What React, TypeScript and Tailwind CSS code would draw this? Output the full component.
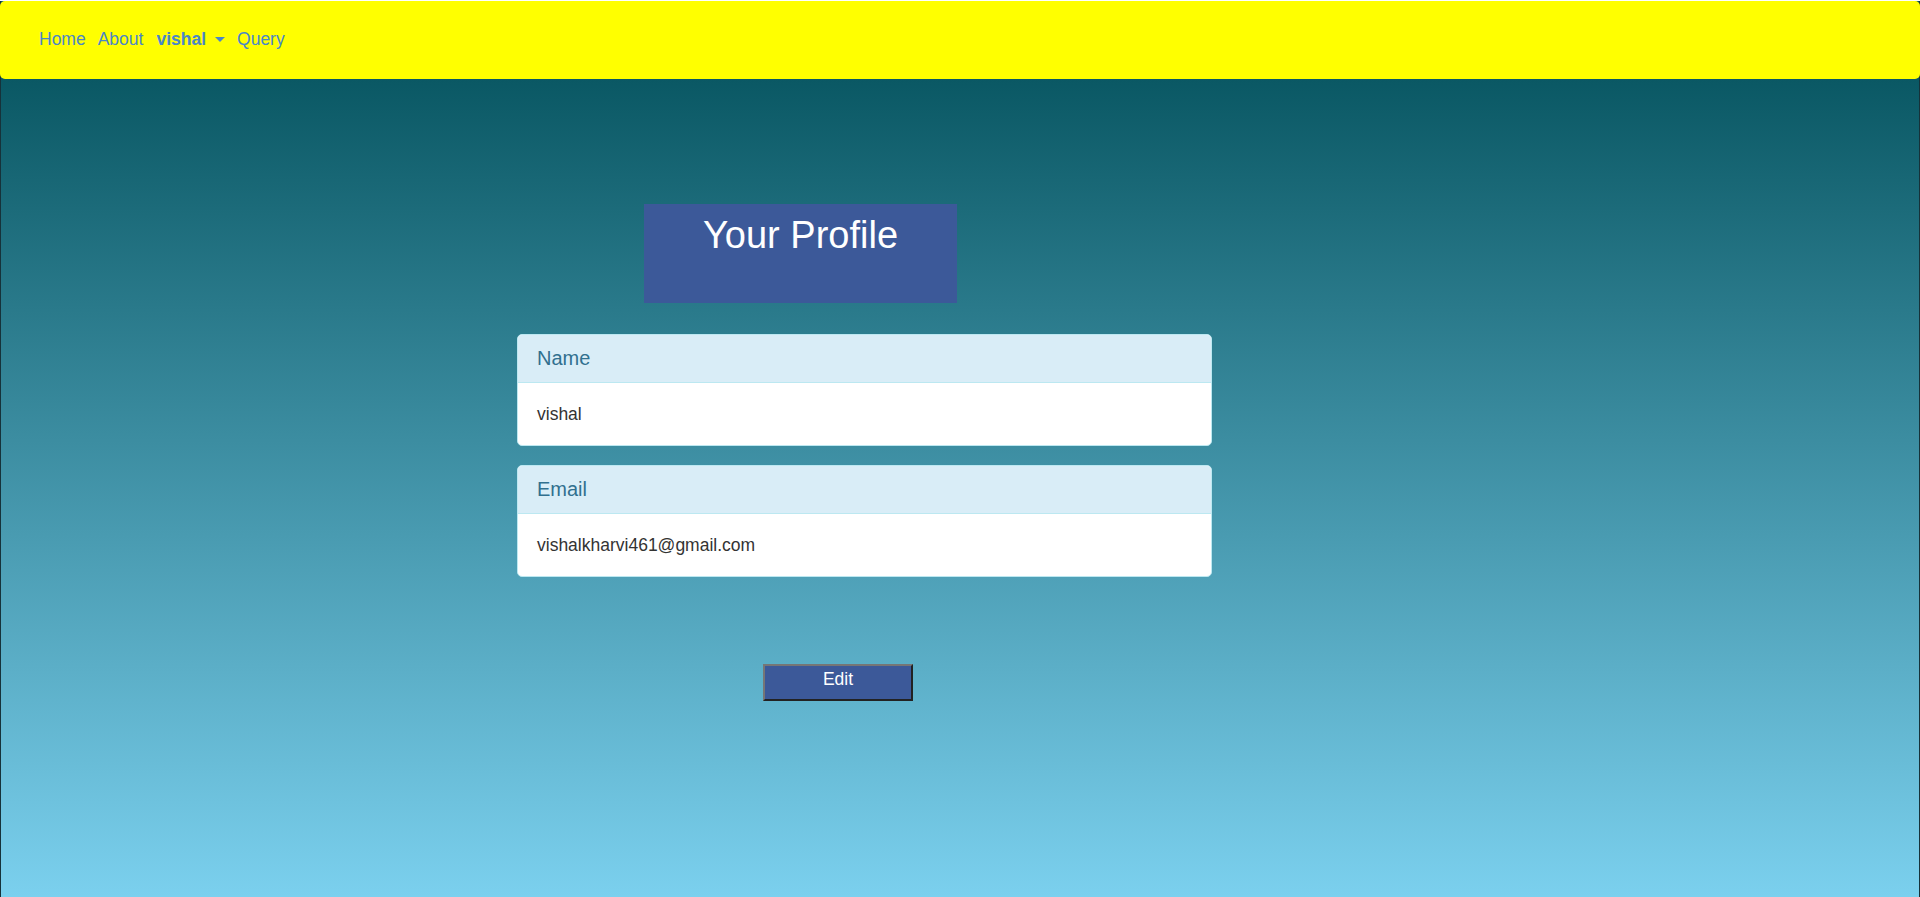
import React from "react";

export default function App() {
  return (
    <div className="h-[897px] w-full bg-white pt-px overflow-hidden" style={{ fontFamily: '"Liberation Sans", Arial, sans-serif' }}>
      <div className="flex h-[896px] flex-col border-x border-[#16323a] bg-[linear-gradient(to_bottom,#0a5864_78px,#7bd0ee)]">
        <nav className="-mx-px flex h-[78px] shrink-0 items-center rounded-[5px] bg-[#ffff00] pb-[2px] pl-[39px] text-[17.5px] text-[#4a86c8]">
          <a className="mr-[12px]">Home</a>
          <a className="mr-[13px]">About</a>
          <a className="flex items-center font-bold">
            vishal
            <span className="ml-[9px] mr-[12px] inline-block h-0 w-0 border-x-[5.5px] border-t-[5.5px] border-x-transparent border-t-[#4a86c8]" />
          </a>
          <a>Query</a>
        </nav>
        <div className="flex flex-col items-start">
          <div className="ml-[643px] mt-[125px] h-[99px] w-[313px] bg-[#3c5999] pt-[10px] text-center">
            <h1 className="text-[38px] leading-[42px] text-white">Your Profile</h1>
          </div>
          <div className="ml-[516px] mt-[31px] w-[695px] overflow-hidden rounded-[5px] border border-[#bce8f1] bg-white">
            <div className="h-[48px] border-b border-[#bce8f1] bg-[#d9edf7] px-[19px] pt-[12px] text-[20px] leading-[22px] text-[#31708f]">Name</div>
            <div className="px-[19px] pt-[19px] pb-[18px] text-[17.5px] leading-[25px] text-[#333]">vishal</div>
          </div>
          <div className="ml-[516px] mt-[19px] w-[695px] overflow-hidden rounded-[5px] border border-[#bce8f1] bg-white">
            <div className="h-[48px] border-b border-[#bce8f1] bg-[#d9edf7] px-[19px] pt-[12px] text-[20px] leading-[22px] text-[#31708f]">Email</div>
            <div className="px-[19px] pt-[19px] pb-[18px] text-[17.5px] leading-[25px] text-[#333]">vishalkharvi461@gmail.com</div>
          </div>
          <button className="ml-[762px] mt-[87px] h-[37px] w-[150px] border-2 border-t-[#767676] border-l-[#767676] border-b-[#222] border-r-[#222] bg-[#3c5999] pb-[5px] text-[17.5px] leading-none text-white">
            Edit
          </button>
        </div>
      </div>
    </div>
  );
}
